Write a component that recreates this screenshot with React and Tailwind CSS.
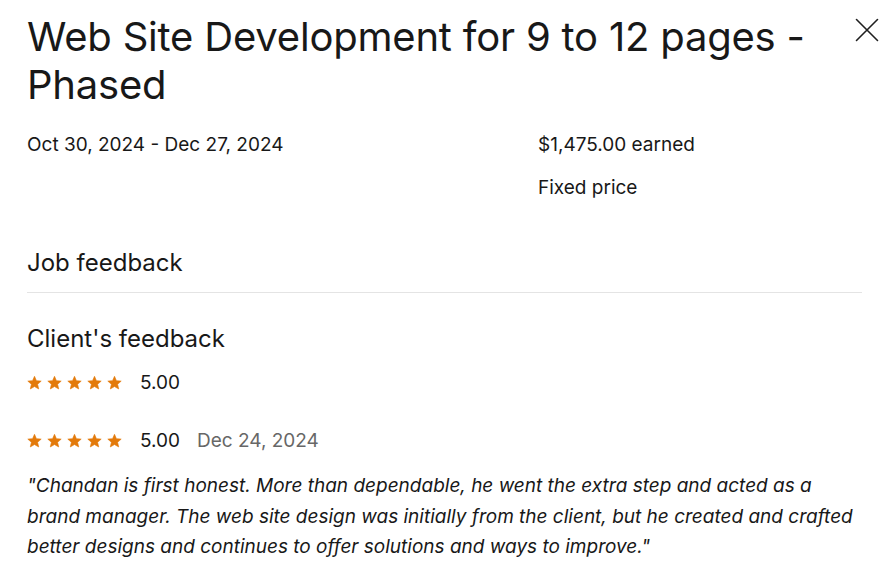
const FONT = { fontFamily: 'Inter, "Liberation Sans", Arial, sans-serif' }

function Star() {
  return (
    <svg width="15" height="14" viewBox="0 0 24 23" className="shrink-0">
      <path
        d="M12 0.5l3.2 7.2 7.8 0.7-5.9 5.2 1.8 7.7L12 17.3l-6.9 4 1.8-7.7-5.9-5.2 7.8-0.7z"
        fill="#e37a0b"
        stroke="#e37a0b"
        strokeWidth="1"
        strokeLinejoin="round"
      />
    </svg>
  )
}

function Stars() {
  return (
    <div className="flex items-center gap-[5px]">
      <Star /><Star /><Star /><Star /><Star />
    </div>
  )
}

function CloseIcon() {
  return (
    <svg width="24" height="24" viewBox="0 0 24 24" fill="none" stroke="#1f1f1f" strokeWidth="1.6" strokeLinecap="round">
      <path d="M1.5 1.5l21 21M22.5 1.5l-21 21" />
    </svg>
  )
}

export default function App() {
  return (
    <div style={FONT} className="w-[890px] h-[581px] bg-white text-[#181818] overflow-hidden pl-[27px] pr-[28px]">
      {/* Header */}
      <div className="flex items-start justify-between pt-[13px]">
        <h1 className="w-[800px] text-[40px] leading-[48px] tracking-[-0.2px]">
          Web Site Development for 9 to 12 pages - Phased
        </h1>
        <button className="mt-[5px] -mr-[17px]">
          <CloseIcon />
        </button>
      </div>

      {/* Meta */}
      <div className="flex mt-[24px] text-[19px] leading-[24px]">
        <div className="w-[511px]">Oct 30, 2024 - Dec 27, 2024</div>
        <div className="flex flex-col gap-[19px]">
          <span>$1,475.00 earned</span>
          <span>Fixed price</span>
        </div>
      </div>

      {/* Job feedback */}
      <div className="mt-[48px] pb-[14px] border-b border-[#e4e4e4] text-[24px] leading-[30px]">
        Job feedback
      </div>

      <div className="mt-[31px] text-[24px] leading-[30px]">Client's feedback</div>

      <div className="flex items-center gap-[18px] mt-[17px] text-[19px] leading-[24px]">
        <Stars />
        <span>5.00</span>
      </div>

      <div className="flex items-center mt-[34px] text-[19px] leading-[24px]">
        <Stars />
        <span className="ml-[18px]">5.00</span>
        <span className="ml-[17px] text-[#676767]">Dec 24, 2024</span>
      </div>

      <p className="mt-[18px] italic text-[19px] leading-[30.5px]">
        "Chandan is first honest. More than dependable, he went the extra step and acted as a brand manager. The web site design was initially from the client, but he created and crafted better designs and continues to offer solutions and ways to improve."
      </p>
    </div>
  )
}
